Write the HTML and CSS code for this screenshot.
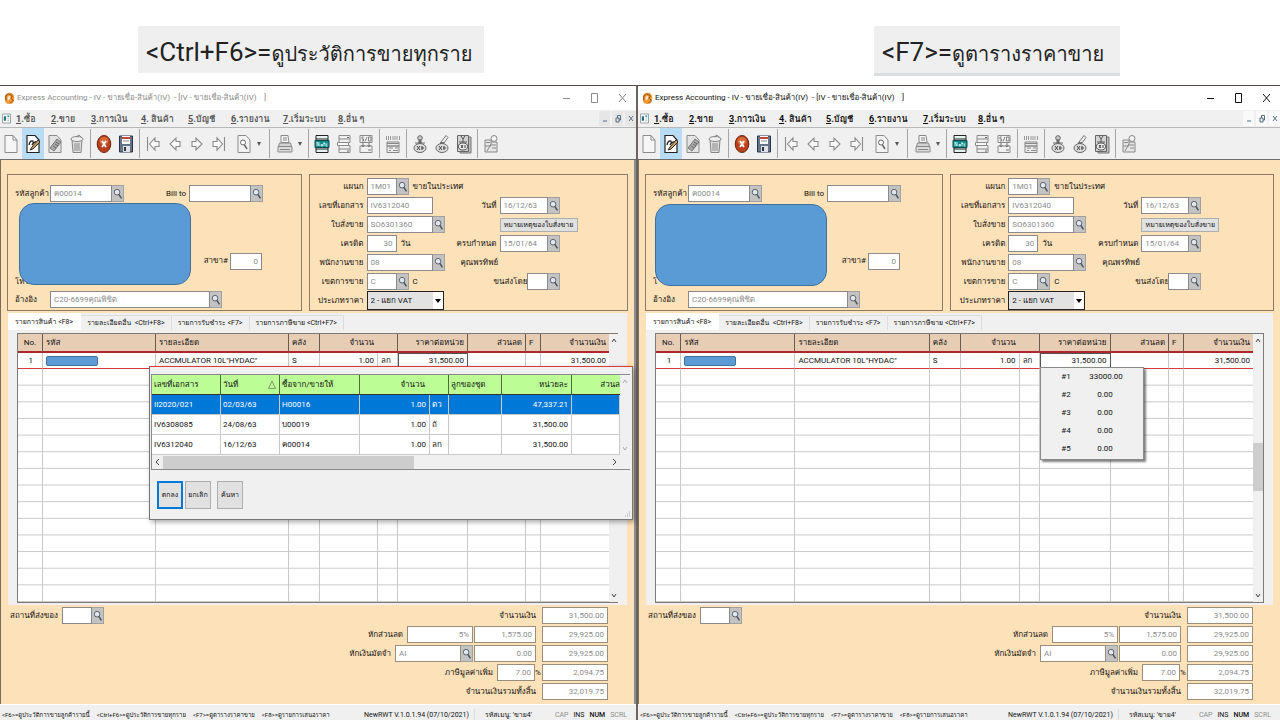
FILE: index.html
```html
<!DOCTYPE html>
<html lang="th">
<head>
<meta charset="utf-8">
<title>Express Accounting - IV</title>
<link rel="stylesheet" href="styles.css">
</head>
<body>
<svg class="defs" aria-hidden="true">
  <symbol id="app" viewBox="0 0 12 14"><path d="M1 4 Q3 0 8 1 Q12 3 11 8 Q11 13 6 13 Q1 13 1 8Z" fill="#f09a3a"/><path d="M2 9 L2 4 L5 2 L9 4 L8 7 L10 9 L7 12" fill="none" stroke="#8a4510" stroke-width="1"/><path d="M4 5 L7 4 L6 8 L4 9Z" fill="#fff0d0"/></symbol>
  <symbol id="mdi" viewBox="0 0 10 11"><path d="M.5 .5h9v10h-9z" fill="#fff" stroke="#8a9aa0"/><path d="M2 3h2.500v5H2z" fill="#24707c"/><path d="M6 2h2v2H6z" fill="#3a96b0"/><path d="M6 6h2M6 8h2" stroke="#aaa"/></symbol>
  <symbol id="lens" viewBox="0 0 12 17"><circle cx="5.500" cy="7" r="3.200" fill="#dfe6ee" stroke="#5c6068" stroke-width="1.100"/><path d="M7.500 9.500 L10.500 14" stroke="#50545c" stroke-width="1.800"/></symbol>
  <symbol id="new" viewBox="0 0 16 20"><path d="M2 1.500h8l4 4.500v12.500H2z" fill="#f6f6f6" stroke="#8b8b8b"/><path d="M10 1.500v4.500h4" fill="none" stroke="#8b8b8b"/></symbol>
  <symbol id="edit" viewBox="0 0 16 20"><path d="M2 1.500h8l4 4.500v12.500H2z" fill="#fff" stroke="#222" stroke-width="1.200"/><path d="M4 11 Q5 6 8 7 Q9 9 7 11 Q9 7 12 8" fill="none" stroke="#222" stroke-width="1.300"/><path d="M5 16 L7 13 L13 6 L15 8 L8 15Z" fill="#c9a06a" stroke="#3b2c1c"/></symbol>
  <symbol id="clip" viewBox="0 0 16 20"><path d="M2 1.500h8l4 4.500v12.500H2z" fill="#e4e4e4" stroke="#8b8b8b"/><path d="M3 14 L10 5 L14 8 L7 17Z" fill="#aaa" stroke="#777"/><path d="M6 12l3 2M8 10l3 2M9 8l3 2" stroke="#555" stroke-width=".8"/></symbol>
  <symbol id="bin" viewBox="0 0 16 20"><path d="M3 6h10l-1 12.500H4z" fill="#e0e0e0" stroke="#858585"/><ellipse cx="8" cy="5" rx="6" ry="2.500" fill="#efefef" stroke="#858585"/><path d="M6 9v8M8 9v8M10 9v8M7 3l3-2 3 3" fill="none" stroke="#8b8b8b"/></symbol>
  <symbol id="stop" viewBox="0 0 16 20"><ellipse cx="8" cy="10" rx="6.800" ry="8.500" fill="#b8401a" stroke="#6a2410"/><ellipse cx="8" cy="7" rx="4.500" ry="4" fill="#d86a3a"/><path d="M6 7l4 6M10 7l-4 6" stroke="#fff" stroke-width="1.800"/></symbol>
  <symbol id="save" viewBox="0 0 16 20"><path d="M1.500 2h13v16h-13z" fill="#66748a" stroke="#2c3442"/><path d="M4 2h8v8H4z" fill="#fff"/><path d="M4 3h8v2H4z" fill="#c04a3a"/><path d="M5 7h6" stroke="#888"/><path d="M5 12h7v6H5z" fill="#dde2ea"/><path d="M6 13h2v4H6z" fill="#333"/></symbol>
  <symbol id="first" viewBox="0 0 16 20"><path d="M2.500 3v14M14 7.500h-4V4L4.500 10l5.500 6v-3.500h4z" fill="#f8f8f8" stroke="#8b8b8b" stroke-width="1.100"/></symbol>
  <symbol id="prev" viewBox="0 0 16 20"><path d="M13 7.500H9V4L3 10l6 6v-3.500h4z" fill="#f8f8f8" stroke="#8b8b8b" stroke-width="1.100"/></symbol>
  <symbol id="next" viewBox="0 0 16 20"><path d="M3 7.500h4V4l6 6-6 6v-3.500H3z" fill="#f8f8f8" stroke="#8b8b8b" stroke-width="1.100"/></symbol>
  <symbol id="last" viewBox="0 0 16 20"><path d="M13.500 3v14M2 7.500h4V4l5.500 6L6 16v-3.500H2z" fill="#f8f8f8" stroke="#8b8b8b" stroke-width="1.100"/></symbol>
  <symbol id="find" viewBox="0 0 16 20"><path d="M2 1.500h8l4 4.500v12.500H2z" fill="#f2f2f2" stroke="#8b8b8b"/><circle cx="7" cy="8.500" r="2.500" fill="#fff" stroke="#666"/><path d="M8.500 11l2.500 4" stroke="#666" stroke-width="1.500"/></symbol>
  <symbol id="print" viewBox="0 0 16 20"><path d="M4 1.500h7l1 7H4z" fill="#f4f4f4" stroke="#888"/><path d="M6 4h4M6 6h4" stroke="#888"/><path d="M2.500 9h11l1 3.500h-13z" fill="#d2d2d2" stroke="#888"/><path d="M1 12.500h14v5.500H1z" fill="#dcdcdc" stroke="#888"/><path d="M3 15.500h10" stroke="#888"/></symbol>
  <symbol id="note" viewBox="0 0 16 20"><path d="M2 1.500h12v17H2z" fill="#e6f2f0" stroke="#222"/><path d="M2 5h12M2 15h12" stroke="#222"/><path d="M1 6.500h14v7H1z" fill="#148a88" stroke="#0a4c4c"/><path d="M3 12V8l2 4V8M7 10.500h1.500v1.500H7zM10 8v4M9.500 9.500h2M13.500 10H12v2h1.500" fill="none" stroke="#d8ffff" stroke-width=".8"/></symbol>
  <symbol id="ledger" viewBox="0 0 16 20"><path d="M3 1.500h11v7H3zM3 11.500h11v7H3z" fill="#eee" stroke="#8b8b8b"/><path d="M3 5h11M3 15h11M1.500 8.500h11v3h-11z" fill="#f6f6f6" stroke="#8b8b8b"/><path d="M11 3.500h2M11 17h2" stroke="#666"/></symbol>
  <symbol id="so" viewBox="0 0 16 20"><path d="M2 1.500h12v7H2zM2 12h12v6.500H2z" fill="#f0f0f0" stroke="#8b8b8b"/><path d="M5.500 3H4v2h1.500v2H4M9 3l-2 4.500M10.500 3H13v4h-2.500z" fill="none" stroke="#777" stroke-width=".9"/><path d="M5 9v3M11 9v3M3.500 11L5 13l1.500-2M9.500 11l1.500 2 1.500-2M10 16h3" fill="none" stroke="#777"/></symbol>
  <symbol id="form" viewBox="0 0 16 20"><path d="M1.500 2v4M3.500 2v4M5.500 2v4M8 2v4M10 2v4M12 2v4M14.500 2v4" stroke="#999"/><path d="M2 8h12v4H2zM2 12h12v6.500H2z" fill="#ececec" stroke="#888"/><path d="M2 9.500h12M4 14h4M10 14h3M4 16.500h2M8 16.500h5" stroke="#888"/></symbol>
  <symbol id="stamp" viewBox="0 0 16 20"><circle cx="8" cy="4" r="2.300" fill="#ccc" stroke="#666"/><path d="M7 6h2v3H7zM3 9h10" fill="#777" stroke="#666"/><ellipse cx="8" cy="14" rx="6" ry="4.500" fill="#ddd" stroke="#666"/><path d="M5 12l3 4M8 12l-3 4M10 12v4M9 14h3" stroke="#444"/></symbol>
  <symbol id="sign" viewBox="0 0 16 20"><path d="M7 8l5-6.500 2 2L10 9z" fill="#eee" stroke="#777"/><path d="M6 8h4v2H6z" fill="#777"/><ellipse cx="8" cy="14" rx="6" ry="4.500" fill="#ddd" stroke="#666"/><path d="M5 12l3 4M8 12l-3 4M10 12v4M9 14h3" stroke="#444"/></symbol>
  <symbol id="batch" viewBox="0 0 16 20"><path d="M4 3h11v16H4z" fill="#bbb" stroke="#777"/><path d="M1.500 1.500h11v16h-11z" fill="#d4d4d4" stroke="#666"/><path d="M5 2l2 3 2-3M7 5v3M3 8h8" fill="none" stroke="#555"/><ellipse cx="7" cy="12.500" rx="4.500" ry="3.500" fill="#eee" stroke="#555"/><path d="M5 11l2 3M7 11l-2 3M9 11v3" stroke="#444"/></symbol>
  <symbol id="user" viewBox="0 0 16 20"><circle cx="11" cy="4.500" r="3" fill="#f2f2f2" stroke="#888"/><path d="M2 6h6v6H2zM8 8h6v10H2v-6" fill="#e6e6e6" stroke="#888"/><path d="M3 8.500h4M4 17l4-7M9 11h4M9 14h4" stroke="#888"/></symbol>
</svg>

<header class="captions">
  <div class="caption-cell first"><h1 class="caption">&lt;Ctrl+F6&gt;=<span>ดูประวัติการขายทุกราย</span></h1></div>
  <div class="caption-cell second"><h1 class="caption lined">&lt;F7&gt;=<span>ดูตารางราคาขาย</span></h1></div>
</header>

<main class="windows">
<section class="window inactive">
  <div class="titlebar">
    <svg class="app-icon"><use href="#app"/></svg>
    <span class="title-a">Express Accounting - IV - ขายเชื่อ-สินค้า(IV)</span><span class="title-b">- [IV - ขายเชื่อ-สินค้า(IV)</span><span class="title-c">]</span>
    <div class="win-buttons"><button aria-label="Minimize"><svg><path d="M0 5.500h7"/></svg></button><button aria-label="Maximize"><svg><path d="M.5 .5h6v9h-6z"/></svg></button><button aria-label="Close"><svg><path d="M0 1l7 8M7 1l-7 8"/></svg></button></div>
  </div>
  <nav class="menubar">
    <svg class="mdi-icon"><use href="#mdi"/></svg>
    <a href="#"><u>1</u>.ซื้อ</a><a href="#"><u>2</u>.ขาย</a><a href="#"><u>3</u>.การเงิน</a><a href="#"><u>4</u>. สินค้า</a><a href="#"><u>5</u>.บัญชี</a><a href="#"><u>6</u>.รายงาน</a><a href="#"><u>7</u>.เริ่มระบบ</a><a href="#"><u>8</u>.อื่น ๆ</a>
    <div class="mdi-buttons"><button aria-label="Minimize document"><svg><path d="M1 7h4"/></svg></button><button aria-label="Restore document"><svg><path d="M1 4h3v4H1zM2.500 4V1.500h3V6H4"/></svg></button><button aria-label="Close document"><svg><path d="M1 2l4 5M5 2L1 7"/></svg></button></div>
  </nav>
  <div class="toolbar">
    <button aria-label="New"><svg><use href="#new"/></svg></button><button class="on" aria-label="Edit"><svg><use href="#edit"/></svg></button><button aria-label="Attach"><svg><use href="#clip"/></svg></button><button aria-label="Delete"><svg><use href="#bin"/></svg></button><i class="sep"></i>
    <button aria-label="Cancel"><svg><use href="#stop"/></svg></button><button aria-label="Save"><svg><use href="#save"/></svg></button><i class="sep"></i>
    <button aria-label="First"><svg><use href="#first"/></svg></button><button aria-label="Previous"><svg><use href="#prev"/></svg></button><button aria-label="Next"><svg><use href="#next"/></svg></button><button aria-label="Last"><svg><use href="#last"/></svg></button><button class="drop find" aria-label="Find"><svg><use href="#find"/></svg></button><i class="sep"></i>
    <button class="drop" aria-label="Print"><svg><use href="#print"/></svg></button><i class="sep"></i>
    <button aria-label="Note"><svg><use href="#note"/></svg></button><button aria-label="Ledger"><svg><use href="#ledger"/></svg></button><button aria-label="Sales order"><svg><use href="#so"/></svg></button><i class="sep"></i>
    <button aria-label="Form"><svg><use href="#form"/></svg></button><i class="sep"></i>
    <button aria-label="Approve"><svg><use href="#stamp"/></svg></button><button aria-label="Sign"><svg><use href="#sign"/></svg></button><button aria-label="Batch approve"><svg><use href="#batch"/></svg></button><i class="sep"></i>
    <button aria-label="Customer"><svg><use href="#user"/></svg></button>
  </div>
  <div class="body">
    <div class="forms">
      <div class="box customer">
        <div class="line"><label class="lead" for="l-code">รหัสลูกค้า</label><input class="w62" id="l-code" value="ค00014"><button class="lens" aria-label="ค้นหาลูกค้า"><svg><use href="#lens"/></svg></button><label class="bill" for="l-bill">Bill to</label><input class="w62" id="l-bill"><button class="lens" aria-label="ค้นหา Bill to"><svg><use href="#lens"/></svg></button></div>
        <div class="address"><span class="phone">โทร</span><div class="mask"></div><label for="l-branch">สาขา#</label><input class="w32 num" id="l-branch" value="0"></div>
        <div class="line"><label class="lead" for="l-ref">อ้างอิง</label><input class="w160" id="l-ref" value="C20-6699คุณพิชิต"><button class="lens" aria-label="ค้นหาอ้างอิง"><svg><use href="#lens"/></svg></button></div>
      </div>
      <div class="box document">
        <label for="l-dep">แผนก</label><div class="field wide"><input class="w30" id="l-dep" value="1M01"><button class="lens" aria-label="ค้นหาแผนก"><svg><use href="#lens"/></svg></button><span>ขายในประเทศ</span></div>
        <label for="l-doc">เลขที่เอกสาร</label><div class="field"><input class="w66" id="l-doc" value="IV6312040"></div><label for="l-date">วันที่</label><div class="field"><input class="w48" id="l-date" value="16/12/63"><button class="lens" aria-label="เลือกวันที่"><svg><use href="#lens"/></svg></button></div>
        <label for="l-so">ใบสั่งขาย</label><div class="field"><input class="w66" id="l-so" value="SO6301360"><button class="lens" aria-label="ค้นหาใบสั่งขาย"><svg><use href="#lens"/></svg></button></div><span></span><div class="field"><button class="note-btn">หมายเหตุของใบสั่งขาย</button></div>
        <label for="l-cr">เครดิต</label><div class="field"><input class="w30 num" id="l-cr" value="30"><span>วัน</span></div><label for="l-due">ครบกำหนด</label><div class="field"><input class="w48" id="l-due" value="15/01/64"><button class="lens" aria-label="เลือกวันครบกำหนด"><svg><use href="#lens"/></svg></button></div>
        <label for="l-emp">พนักงานขาย</label><div class="field"><input class="w66" id="l-emp" value="08"><button class="lens" aria-label="ค้นหาพนักงาน"><svg><use href="#lens"/></svg></button></div><div class="field pair"><span>คุณพรทิพย์</span></div>
        <label for="l-zone">เขตการขาย</label><div class="field"><input class="w30" id="l-zone" value="C"><button class="lens" aria-label="ค้นหาเขต"><svg><use href="#lens"/></svg></button><span>C</span></div><div class="field pair ship"><label for="l-ship">ขนส่งโดย</label><input class="w21" id="l-ship"><button class="lens" aria-label="ค้นหาขนส่ง"><svg><use href="#lens"/></svg></button></div>
        <label for="l-type">ประเภทราคา</label><div class="field"><select class="price" id="l-type"><option>2 - แยก VAT</option></select></div>
      </div>
    </div>
    <div class="panel">
      <div class="tabs"><button class="tab current">รายการสินค้า &lt;F8&gt;</button><button class="tab">รายละเอียดอื่น &nbsp;&lt;Ctrl+F8&gt;</button><button class="tab">รายการรับชำระ &lt;F7&gt;</button><button class="tab">รายการภาษีขาย &lt;Ctrl+F7&gt;</button></div>
      <div class="sheet">
        <table class="items">
          <colgroup><col class="c-no"><col class="c-code"><col class="c-desc"><col class="c-wh"><col class="c-qty"><col class="c-unit"><col class="c-price"><col class="c-disc"><col class="c-f"><col class="c-sum"></colgroup>
          <thead><tr><th class="mid">No.</th><th>รหัส</th><th>รายละเอียด</th><th>คลัง</th><th colspan="2" class="right qty">จำนวน</th><th class="right">ราคาต่อหน่วย</th><th class="right">ส่วนลด</th><th>F</th><th class="right">จำนวนเงิน</th></tr></thead>
          <tbody>
            <tr class="entry"><td class="right">1</td><td><span class="code-mask"></span></td><td>ACCMULATOR 10L"HYDAC"</td><td>S</td><td class="right">1.00</td><td>ลก</td><td class="right focus">31,500.00</td><td></td><td></td><td class="right">31,500.00</td></tr>
            <tr class="blank"><td></td><td></td><td></td><td></td><td></td><td></td><td></td><td></td><td></td><td></td></tr>
          </tbody>
        </table>
        <div class="vscroll"><svg><path d="M1 6l2-3 2 3"/></svg><i class="thumb"></i><svg><path d="M1 3l2 3 2-3"/></svg></div>
        <div class="history">
          <div class="history-list">
            <table class="records">
              <colgroup><col class="h-doc"><col class="h-date"><col class="h-who"><col class="h-qty"><col class="h-unit"><col class="h-lot"><col class="h-price"><col class="h-disc"></colgroup>
              <thead><tr><th>เลขที่เอกสาร</th><th><span class="sorted">วันที่<svg><path d="M.5 8.500h7L4 1z"/></svg></span></th><th>ซื้อจาก/ขายให้</th><th colspan="2" class="right qty">จำนวน</th><th>ลูกของชุด</th><th class="right">หน่วยละ</th><th class="right edge">ส่วนล</th></tr></thead>
              <tbody>
                <tr class="picked"><td>II2020/021</td><td>02/03/63</td><td>H00016</td><td class="right">1.00</td><td>ตว</td><td></td><td class="right">47,337.21</td><td></td></tr>
                <tr><td>IV6308085</td><td>24/08/63</td><td>บ00019</td><td class="right">1.00</td><td>ถั</td><td></td><td class="right">31,500.00</td><td></td></tr>
                <tr><td>IV6312040</td><td>16/12/63</td><td>ค00014</td><td class="right">1.00</td><td>ลก</td><td></td><td class="right">31,500.00</td><td></td></tr>
              </tbody>
            </table>
            <div class="vscroll dim"><svg><path d="M1 6l2-3 2 3"/></svg><svg><path d="M1 3l2 3 2-3"/></svg></div>
            <div class="hscroll"><svg><path d="M5 1L2 4l3 3"/></svg><i></i><svg><path d="M2 1l3 3-3 3"/></svg></div>
          </div>
          <div class="history-actions"><button class="primary">ตกลง</button><button>ยกเลิก</button><button class="apart">ค้นหา</button></div>
          <svg class="grip"><path d="M5 1h1M3 3h1M5 3h1M1 5h1M3 5h1M5 5h1"/></svg>
        </div>
      </div>
    </div>
    <div class="footer">
      <div class="deliver"><label for="l-del">สถานที่ส่งของ</label><input class="w30" id="l-del"><button class="lens" aria-label="ค้นหาสถานที่"><svg><use href="#lens"/></svg></button></div>
      <div class="totals">
        <div class="sum"><label for="l-t1">จำนวนเงิน</label><input class="w66 num last" id="l-t1" value="31,500.00"></div>
        <div class="sum"><label for="l-t2">หักส่วนลด</label><input class="w66 num" id="l-t2" value="5%"><input class="w62 num" aria-label="ส่วนลด" value="1,575.00"><input class="w66 num last" aria-label="หลังหักส่วนลด" value="29,925.00"></div>
        <div class="sum"><label for="l-t3">หักเงินมัดจำ</label><span class="field"><input class="w66" id="l-t3" value="AI"><button class="lens" aria-label="ค้นหามัดจำ"><svg><use href="#lens"/></svg></button></span><input class="w62 num" aria-label="มัดจำ" value="0.00"><input class="w66 num last" aria-label="หลังหักมัดจำ" value="29,925.00"></div>
        <div class="sum"><label for="l-t4">ภาษีมูลค่าเพิ่ม</label><input class="w38 num" id="l-t4" value="7.00"><span class="pct">%</span><input class="w66 num last" aria-label="ภาษี" value="2,094.75"></div>
        <div class="sum"><label for="l-t5">จำนวนเงินรวมทั้งสิ้น</label><input class="w66 num last" id="l-t5" value="32,019.75"></div>
      </div>
    </div>
  </div>
  <footer class="status"><span class="keys"><span>&lt;F6&gt;=ดูประวัติการขายลูกค้ารายนี้</span><span>&lt;Ctrl+F6&gt;=ดูประวัติการขายทุกราย</span><span>&lt;F7&gt;=ดูตารางราคาขาย</span><span>&lt;F8&gt;=ดูรายการเสนอราคา</span></span><span class="ver">NewRWT V.1.0.1.94 (07/10/2021)</span><span class="menu-code">รหัสเมนู: 'ขาย4'</span><span class="off">CAP</span><span>INS</span><span class="numlock">NUM</span><span class="off">SCRL</span></footer>
</section>

<section class="window active">
  <div class="titlebar">
    <svg class="app-icon"><use href="#app"/></svg>
    <span class="title-a">Express Accounting - IV - ขายเชื่อ-สินค้า(IV)</span><span class="title-b">- [IV - ขายเชื่อ-สินค้า(IV)</span><span class="title-c">]</span>
    <div class="win-buttons"><button aria-label="Minimize"><svg><path d="M0 5.500h7"/></svg></button><button aria-label="Maximize"><svg><path d="M.5 .5h6v9h-6z"/></svg></button><button aria-label="Close"><svg><path d="M0 1l7 8M7 1l-7 8"/></svg></button></div>
  </div>
  <nav class="menubar">
    <svg class="mdi-icon"><use href="#mdi"/></svg>
    <a href="#"><u>1</u>.ซื้อ</a><a href="#"><u>2</u>.ขาย</a><a href="#"><u>3</u>.การเงิน</a><a href="#"><u>4</u>. สินค้า</a><a href="#"><u>5</u>.บัญชี</a><a href="#"><u>6</u>.รายงาน</a><a href="#"><u>7</u>.เริ่มระบบ</a><a href="#"><u>8</u>.อื่น ๆ</a>
    <div class="mdi-buttons"><button aria-label="Minimize document"><svg><path d="M1 7h4"/></svg></button><button aria-label="Restore document"><svg><path d="M1 4h3v4H1zM2.500 4V1.500h3V6H4"/></svg></button><button aria-label="Close document"><svg><path d="M1 2l4 5M5 2L1 7"/></svg></button></div>
  </nav>
  <div class="toolbar">
    <button aria-label="New"><svg><use href="#new"/></svg></button><button class="on" aria-label="Edit"><svg><use href="#edit"/></svg></button><button aria-label="Attach"><svg><use href="#clip"/></svg></button><button aria-label="Delete"><svg><use href="#bin"/></svg></button><i class="sep"></i>
    <button aria-label="Cancel"><svg><use href="#stop"/></svg></button><button aria-label="Save"><svg><use href="#save"/></svg></button><i class="sep"></i>
    <button aria-label="First"><svg><use href="#first"/></svg></button><button aria-label="Previous"><svg><use href="#prev"/></svg></button><button aria-label="Next"><svg><use href="#next"/></svg></button><button aria-label="Last"><svg><use href="#last"/></svg></button><button class="drop find" aria-label="Find"><svg><use href="#find"/></svg></button><i class="sep"></i>
    <button class="drop" aria-label="Print"><svg><use href="#print"/></svg></button><i class="sep"></i>
    <button aria-label="Note"><svg><use href="#note"/></svg></button><button aria-label="Ledger"><svg><use href="#ledger"/></svg></button><button aria-label="Sales order"><svg><use href="#so"/></svg></button><i class="sep"></i>
    <button aria-label="Form"><svg><use href="#form"/></svg></button><i class="sep"></i>
    <button aria-label="Approve"><svg><use href="#stamp"/></svg></button><button aria-label="Sign"><svg><use href="#sign"/></svg></button><button aria-label="Batch approve"><svg><use href="#batch"/></svg></button><i class="sep"></i>
    <button aria-label="Customer"><svg><use href="#user"/></svg></button>
  </div>
  <div class="body">
    <div class="forms">
      <div class="box customer">
        <div class="line"><label class="lead" for="r-code">รหัสลูกค้า</label><input class="w62" id="r-code" value="ค00014"><button class="lens" aria-label="ค้นหาลูกค้า"><svg><use href="#lens"/></svg></button><label class="bill" for="r-bill">Bill to</label><input class="w62" id="r-bill"><button class="lens" aria-label="ค้นหา Bill to"><svg><use href="#lens"/></svg></button></div>
        <div class="address"><div class="mask"></div><label for="r-branch">สาขา#</label><input class="w32 num" id="r-branch" value="0"><span class="phone">โ</span></div>
        <div class="line"><label class="lead" for="r-ref">อ้างอิง</label><input class="w160" id="r-ref" value="C20-6699คุณพิชิต"><button class="lens" aria-label="ค้นหาอ้างอิง"><svg><use href="#lens"/></svg></button></div>
      </div>
      <div class="box document">
        <label for="r-dep">แผนก</label><div class="field wide"><input class="w30" id="r-dep" value="1M01"><button class="lens" aria-label="ค้นหาแผนก"><svg><use href="#lens"/></svg></button><span>ขายในประเทศ</span></div>
        <label for="r-doc">เลขที่เอกสาร</label><div class="field"><input class="w66" id="r-doc" value="IV6312040"></div><label for="r-date">วันที่</label><div class="field"><input class="w48" id="r-date" value="16/12/63"><button class="lens" aria-label="เลือกวันที่"><svg><use href="#lens"/></svg></button></div>
        <label for="r-so">ใบสั่งขาย</label><div class="field"><input class="w66" id="r-so" value="SO6301360"><button class="lens" aria-label="ค้นหาใบสั่งขาย"><svg><use href="#lens"/></svg></button></div><span></span><div class="field"><button class="note-btn">หมายเหตุของใบสั่งขาย</button></div>
        <label for="r-cr">เครดิต</label><div class="field"><input class="w30 num" id="r-cr" value="30"><span>วัน</span></div><label for="r-due">ครบกำหนด</label><div class="field"><input class="w48" id="r-due" value="15/01/64"><button class="lens" aria-label="เลือกวันครบกำหนด"><svg><use href="#lens"/></svg></button></div>
        <label for="r-emp">พนักงานขาย</label><div class="field"><input class="w66" id="r-emp" value="08"><button class="lens" aria-label="ค้นหาพนักงาน"><svg><use href="#lens"/></svg></button></div><div class="field pair"><span>คุณพรทิพย์</span></div>
        <label for="r-zone">เขตการขาย</label><div class="field"><input class="w30" id="r-zone" value="C"><button class="lens" aria-label="ค้นหาเขต"><svg><use href="#lens"/></svg></button><span>C</span></div><div class="field pair ship"><label for="r-ship">ขนส่งโดย</label><input class="w21" id="r-ship"><button class="lens" aria-label="ค้นหาขนส่ง"><svg><use href="#lens"/></svg></button></div>
        <label for="r-type">ประเภทราคา</label><div class="field"><select class="price" id="r-type"><option>2 - แยก VAT</option></select></div>
      </div>
    </div>
    <div class="panel">
      <div class="tabs"><button class="tab current">รายการสินค้า &lt;F8&gt;</button><button class="tab">รายละเอียดอื่น &nbsp;&lt;Ctrl+F8&gt;</button><button class="tab">รายการรับชำระ &lt;F7&gt;</button><button class="tab">รายการภาษีขาย &lt;Ctrl+F7&gt;</button></div>
      <div class="sheet">
        <table class="items">
          <colgroup><col class="c-no"><col class="c-code"><col class="c-desc"><col class="c-wh"><col class="c-qty"><col class="c-unit"><col class="c-price"><col class="c-disc"><col class="c-f"><col class="c-sum"></colgroup>
          <thead><tr><th class="mid">No.</th><th>รหัส</th><th>รายละเอียด</th><th>คลัง</th><th colspan="2" class="right qty">จำนวน</th><th class="right">ราคาต่อหน่วย</th><th class="right">ส่วนลด</th><th>F</th><th class="right">จำนวนเงิน</th></tr></thead>
          <tbody>
            <tr class="entry"><td class="right">1</td><td><span class="code-mask"></span></td><td>ACCMULATOR 10L"HYDAC"</td><td>S</td><td class="right">1.00</td><td>ลก</td><td class="right focus">31,500.00</td><td></td><td></td><td class="right">31,500.00</td></tr>
            <tr class="blank"><td></td><td></td><td></td><td></td><td></td><td></td><td></td><td></td><td></td><td></td></tr>
          </tbody>
        </table>
        <div class="vscroll"><svg><path d="M1 6l2-3 2 3"/></svg><i class="thumb"></i><svg><path d="M1 3l2 3 2-3"/></svg></div>
        <ul class="prices"><li><span>#1</span><span>33000.00</span></li><li><span>#2</span><span>0.00</span></li><li><span>#3</span><span>0.00</span></li><li><span>#4</span><span>0.00</span></li><li><span>#5</span><span>0.00</span></li></ul>
      </div>
    </div>
    <div class="footer">
      <div class="deliver"><label for="r-del">สถานที่ส่งของ</label><input class="w30" id="r-del"><button class="lens" aria-label="ค้นหาสถานที่"><svg><use href="#lens"/></svg></button></div>
      <div class="totals">
        <div class="sum"><label for="r-t1">จำนวนเงิน</label><input class="w66 num last" id="r-t1" value="31,500.00"></div>
        <div class="sum"><label for="r-t2">หักส่วนลด</label><input class="w66 num" id="r-t2" value="5%"><input class="w62 num" aria-label="ส่วนลด" value="1,575.00"><input class="w66 num last" aria-label="หลังหักส่วนลด" value="29,925.00"></div>
        <div class="sum"><label for="r-t3">หักเงินมัดจำ</label><span class="field"><input class="w66" id="r-t3" value="AI"><button class="lens" aria-label="ค้นหามัดจำ"><svg><use href="#lens"/></svg></button></span><input class="w62 num" aria-label="มัดจำ" value="0.00"><input class="w66 num last" aria-label="หลังหักมัดจำ" value="29,925.00"></div>
        <div class="sum"><label for="r-t4">ภาษีมูลค่าเพิ่ม</label><input class="w38 num" id="r-t4" value="7.00"><span class="pct">%</span><input class="w66 num last" aria-label="ภาษี" value="2,094.75"></div>
        <div class="sum"><label for="r-t5">จำนวนเงินรวมทั้งสิ้น</label><input class="w66 num last" id="r-t5" value="32,019.75"></div>
      </div>
    </div>
  </div>
  <footer class="status"><span class="keys"><span>&lt;F6&gt;=ดูประวัติการขายลูกค้ารายนี้</span><span>&lt;Ctrl+F6&gt;=ดูประวัติการขายทุกราย</span><span>&lt;F7&gt;=ดูตารางราคาขาย</span><span>&lt;F8&gt;=ดูรายการเสนอราคา</span></span><span class="ver">NewRWT V.1.0.1.94 (07/10/2021)</span><span class="menu-code">รหัสเมนู: 'ขาย4'</span><span class="off">CAP</span><span>INS</span><span class="numlock">NUM</span><span class="off">SCRL</span></footer>
</section>
</main>
</body>
</html>
```
FILE: styles.css
```css
* { box-sizing: border-box; }
body {
  margin: 0;
  min-height: 100vh;
  display: flex;
  flex-direction: column;
  background: #fff;
  color: #111;
  font: 8px/12px Roboto, Loma, Garuda, sans-serif;
}
button, input, select { font: inherit; color: inherit; margin: 0; padding: 0; border: 0; border-radius: 0; background: none; }
svg { display: block; }
.defs { display: none; }

/* captions above the windows */
.captions, .windows { display: grid; grid-template-columns: 636fr 644fr; }
.captions { height: 85px; padding-top: 26px; align-items: start; }
.caption-cell { display: flex; }
.first { padding-left: 138px; }
.second { padding-left: 238px; }
.caption { margin: 0; padding: 8px 12px 1px 8px; background: #efefef; font-size: 26px; line-height: 36px; font-weight: 400; color: #222; white-space: nowrap; }
.caption span { font-size: 20px; }
.caption.lined { padding-right: 16px; border-bottom: 3px solid #d9dde0; }

/* window frame */
.windows { flex: 1; }
.window { min-width: 0; display: flex; flex-direction: column; border-top: 1px solid #5e4a4a; background: #f0f0f0; }
.active { border-left: 2px solid #6a6360; }
.titlebar { display: flex; align-items: center; height: 24px; padding-left: 4px; background: #fff; white-space: nowrap; }
.app-icon { width: 11px; height: 13px; margin-right: 2px; }
.title-a { width: 157px; }
.title-b { width: 90px; }
.inactive .titlebar { color: #8a8a8a; }
.win-buttons { display: flex; margin-left: auto; }
.win-buttons button { width: 28px; height: 24px; display: grid; place-items: center; }
.win-buttons svg { width: 7px; height: 10px; fill: none; stroke: currentColor; }
.menubar { display: flex; align-items: center; height: 17px; padding-left: 2px; font-size: 9px; font-weight: 700; white-space: nowrap; }
.menubar a { color: inherit; text-decoration: none; width: 40px; }
.menubar a:nth-of-type(1) { width: 35px; }
.menubar a:nth-of-type(3) { width: 50px; }
.menubar a:nth-of-type(4) { width: 47px; }
.menubar a:nth-of-type(5) { width: 43px; }
.menubar a:nth-of-type(6) { width: 52px; }
.menubar a:nth-of-type(7) { width: 55px; }
.active .menubar a:nth-of-type(6) { width: 54px; }
.inactive .menubar { color: #555; }
.mdi-icon { width: 9px; height: 11px; margin-right: 5px; }
.mdi-buttons { display: flex; margin-left: auto; gap: 2px; }
.mdi-buttons button { width: 11px; height: 15px; display: grid; place-items: center; background: #e6e6e6; }
.active .mdi-buttons button { background: #fafafa; }
.mdi-buttons svg { width: 6px; height: 9px; fill: none; stroke: #566a80; }

.toolbar { display: flex; height: 33px; border-top: 1px solid #b8b8b8; border-bottom: 1px solid #6d6d6d; }
.toolbar button { width: 22px; height: 31px; display: flex; align-items: center; justify-content: center; }
.toolbar .on { background: #b9dcf5; }
.toolbar svg { width: 16px; height: 20px; }
.toolbar .drop { width: 34px; gap: 5px; }
.toolbar .find { width: 37px; }
.toolbar .drop::after { content: ""; border: 2px solid transparent; border-top: 4px solid #555; border-bottom: 0; }
.sep { width: 5px; margin: 1px 0; background: linear-gradient(#a4a4a4, #a4a4a4) 50% 0 / 1px 100% no-repeat; }

/* document body */
.body { flex: 1; display: flex; flex-direction: column; background: #fde1b9; border-left: 1px solid #7a6d5c; border-right: 2px solid #8d8d8d; }
.active .body { border-right: 0; }
.forms { display: grid; grid-template-columns: 295fr 320fr; gap: 7px; padding: 14px 6px 2px; }
.box { border: 1px solid #8c7c66; height: 137px; }
input { height: 17px; border: 1px solid #8a8a8a; background: #fff; color: #8c8c8c; padding: 0 3px; min-width: 0; }
.num { text-align: right; }
.w21 { width: 21px; }
.w30 { width: 30px; }
.w32 { width: 32px; }
.w38 { width: 38px; }
.w48 { width: 48px; }
.w62 { width: 62px; }
.w66 { width: 66px; }
.w160 { width: 160px; }
.lens { width: 12px; height: 17px; background: #c3c3c3; border: 1px solid #a0a0a0; border-left: 0; flex: none; }
.lens svg { width: 11px; height: 15px; }
.customer { padding: 10px 6px 0 7px; display: flex; flex-direction: column; }
.line { display: flex; align-items: center; }
.lead { width: 35px; white-space: nowrap; }
.bill { width: 65px; padding-right: 3px; text-align: right; }
.address { position: relative; display: flex; align-items: center; height: 89px; padding-top: 29px; }
.address label { width: 28px; margin-left: 187px; padding-right: 2px; text-align: right; flex: none; }
.phone { position: absolute; left: 0; bottom: 3px; }
.mask { position: absolute; left: 4px; top: 1px; width: 172px; height: 82px; border: 1px solid #41719c; border-radius: 15px; background: #5b9bd5; }
.active .mask { left: 2px; top: 2px; }
.document { display: grid; grid-template-columns: 55px 88px 41px 1fr; grid-auto-rows: 17px; column-gap: 2px; row-gap: 2px; padding-top: 3px; align-items: center; white-space: nowrap; }
.document > label { text-align: right; padding-right: 1px; }
.field { display: flex; align-items: center; }
.field span { margin-left: 4px; }
.wide { grid-column: 2 / -1; }
.pair { grid-column: 3 / -1; }
.ship { padding-left: 37px; }
.ship label { width: 33px; text-align: right; }
.note-btn { width: 78px; height: 14px; background: #e1e1e1; border: 1px solid #adadad; font-size: 7px; font-weight: 500; line-height: 10px; }
.price { appearance: none; width: 77px; height: 19px; padding-left: 3px; border: 1px solid #222; background: linear-gradient(90deg, #e2e2e2 65px, #fff 65px); }
.field:has(.price) { position: relative; height: 19px; }
.field:has(.price)::after { content: ""; position: absolute; left: 68px; top: 8px; border: 3px solid transparent; border-top: 4px solid #000; border-bottom: 0; }

.panel { flex: 1; display: flex; flex-direction: column; margin: 0 7px; background: #f0f0f0; }
.tabs { display: flex; height: 17px; padding-top: 2px; }
.tab { padding: 0 6px; border: 1px solid #dcdcdc; border-width: 1px 1px 0 0; white-space: nowrap; font-size: 7px; }
.tab.current { margin-top: -2px; padding: 0 7px; background: #fff; border-color: #fff; }
.sheet { position: relative; flex: 1; display: flex; margin: 3px 9px 2px; border: 1px solid #7b7b7b; background: #fff; }
.items { flex: 1; table-layout: fixed; border-collapse: separate; border-spacing: 0; width: 100%; height: 268px; }
.items th, .items td { padding: 0 3px; border-right: 1px solid #c9c9c9; white-space: nowrap; overflow: hidden; text-align: left; font-weight: 400; line-height: 12px; }
.items thead th { height: 19px; background: #e8cdb5; border-right-color: #6b5a50; border-bottom: 2px solid #b0262e; }
.items .right { text-align: right; }
.items .mid { text-align: center; }
.items th.qty { padding-right: 23px; }
.items .entry td { height: 16px; border-bottom: 1px solid #d63a3a; }
.items .entry .focus { border: 1px solid #555; border-bottom-color: #d63a3a; }
.items .entry td:first-child { padding-right: 9px; }
.items .blank td { background: linear-gradient(to top, #c9c9c9 1px, #fff 1px) 0 0 / 100% calc(100% / 14); }
.items th:last-child, .items td:last-child { border-right: 0; }
.code-mask { display: block; width: 52px; height: 10px; border: 1px solid #41719c; border-radius: 2px; background: #5b9bd5; }
.c-no { width: 25px; }
.c-code { width: 113px; }
.c-desc { width: 133px; }
.c-wh { width: 31px; }
.c-qty { width: 58px; }
.c-unit { width: 20px; }
.c-price { width: 70px; }
.c-disc { width: 58px; }
.c-f { width: 15px; }
.c-sum { width: 68px; }
.vscroll { flex: none; width: 10px; display: flex; flex-direction: column; align-items: center; justify-content: space-between; padding: 2px 0; background: #f0f0f0; }
.vscroll svg, .hscroll svg { width: 7px; height: 9px; fill: none; stroke: #444; flex: none; }
.vscroll.dim svg { stroke: #aaa; }
.thumb { width: 10px; height: 48px; margin: 98px 0 auto; background: #cdcdcd; }

/* sales history pop-up */
.history { position: absolute; left: 131px; top: 32px; width: 484px; height: 154px; background: #f0f0f0; border: 1px solid #777; box-shadow: 2px 2px 5px rgba(0, 0, 0, .35); display: flex; flex-direction: column; border-top: 1px solid #d63a3a; }
.history-list { display: grid; grid-template-columns: 1fr 10px; border: 1px solid #8a8a8a; margin: 7px 2px 0 1px; }
.records { table-layout: fixed; border-collapse: separate; border-spacing: 0; width: 100%; background: #fff; }
.records th, .records td { height: 20px; padding: 0 3px 0 2px; border-right: 1px solid #c9c9c9; border-bottom: 1px solid #c9c9c9; text-align: left; font-weight: 400; white-space: nowrap; overflow: hidden; }
.records th { background: #bdfd95; border-right-color: #4a6b3a; border-bottom-color: #333; }
.records .right { text-align: right; }
.records th.qty { padding-right: 23px; }
.records th.edge { padding-right: 0; border-right: 0; }
.records .picked td { background: #0078d7; color: #fff; }
.sorted { display: flex; justify-content: space-between; align-items: center; }
.sorted svg { width: 8px; height: 10px; fill: none; stroke: #7d9a6a; }
.h-doc { width: 69px; }
.h-date { width: 59px; }
.h-who { width: 80px; }
.h-qty { width: 70px; }
.h-unit { width: 19px; }
.h-lot { width: 53px; }
.h-price { width: 70px; }
.h-disc { width: 48px; }
.hscroll { grid-column: 1 / -1; display: flex; align-items: center; height: 14px; padding: 0 12px 0 2px; background: #f0f0f0; }
.hscroll i { width: 251px; height: 13px; margin: 0 auto 0 2px; background: #cdcdcd; }
.history-actions { display: flex; gap: 2px; padding: 11px 0 0 7px; }
.history-actions button { width: 26px; height: 28px; background: #e1e1e1; border: 1px solid #adadad; font-size: 7px; font-weight: 500; }
.history-actions .primary { border: 2px solid #0078d7; }
.history-actions .apart { margin-left: 4px; }
.grip { position: absolute; right: 1px; bottom: 1px; width: 7px; height: 7px; stroke: #aaa; }

/* price list drop-down */
.prices { position: absolute; left: 384px; top: 33px; width: 104px; margin: 0; padding: 0 0 1px; list-style: none; background: #f0f0f0; border: 1px solid #8a8a8a; box-shadow: 2px 2px 2px rgba(0, 0, 0, .5); }
.prices li { display: grid; grid-template-columns: 22px 56px; height: 18px; line-height: 18px; padding-left: 14px; text-align: center; }
.prices li:first-child span:last-child { padding-left: 2px; }

/* totals */
.footer { display: flex; justify-content: space-between; padding: 2px 26px 4px 9px; white-space: nowrap; }
.active .footer { padding-right: 27px; }
.deliver { display: flex; align-items: center; align-self: flex-start; }
.deliver label { width: 52px; }
.totals { display: grid; gap: 2px; }
.sum { display: flex; align-items: center; justify-content: flex-end; }
.sum input { border-color: #9a8d7a; }
.sum label { margin-right: 4px; }
.sum .field input { margin-left: 0; }
.sum .w62 { margin-left: 1px; }
.sum .last { margin-left: 6px; }
.sum label + .last { margin-left: 2px; }
.sum .pct + .last { margin-left: 0; }
.pct { width: 7px; }

.status { display: flex; align-items: center; height: 17px; padding: 3px 9px 0 2px; font-size: 7px; line-height: 12px; gap: 5px; white-space: nowrap; border-top: 1px solid #fff; }
.keys { display: flex; gap: 7px; flex: 1; min-width: 0; font-size: 6px; }
.ver { border-right: 1px solid #ddd; padding-right: 5px; }
.menu-code { width: 70px; padding-left: 5px; }
.off { color: #8f8f8f; }
.numlock { font-weight: 500; }
```
